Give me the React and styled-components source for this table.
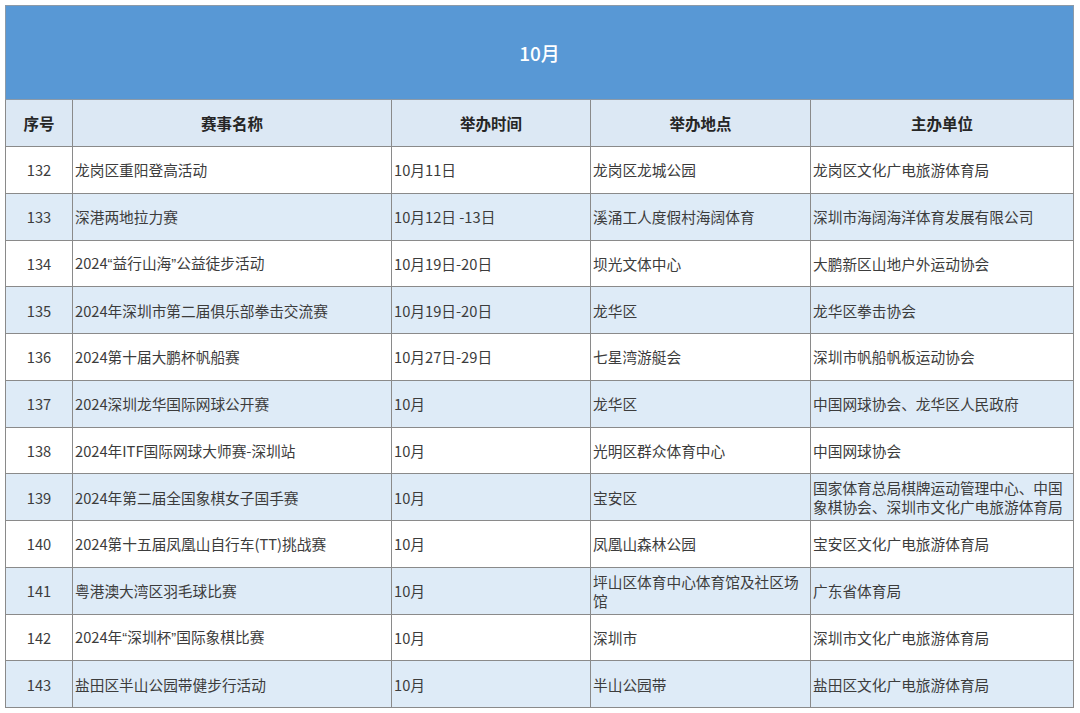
import styled, { createGlobalStyle } from "styled-components";

const GlobalStyle = createGlobalStyle`
  html, body {
    margin: 0;
    padding: 0;
    background: #ffffff;
  }
  body {
    font-family: "Noto Sans CJK SC", "Noto Sans", sans-serif;
  }
`;

const Page = styled.div`
  padding: 5px 7px 6px 5px;
`;

const Table = styled.table`
  width: 1068px;
  border-collapse: collapse;
  table-layout: fixed;
  color: #3c3c3c;
  font-size: 14.7px;
`;

const TitleCell = styled.th`
  height: 93px;
  padding: 0;
  background: #5898d5;
  border: 1px solid #8c9aa8;
  color: #ffffff;
  font-size: 19px;
  font-weight: 500;
  text-align: center;
  vertical-align: middle;
`;

const HeadCell = styled.th`
  height: 46px;
  padding: 0;
  background: #dce8f4;
  border: 1px solid #8a8a8a;
  color: #262626;
  font-size: 15.5px;
  font-weight: 700;
  text-align: center;
  vertical-align: middle;
`;

const Row = styled.tr`
  height: 46.75px;
  background: ${({ $alt }) => ($alt ? "#deebf7" : "#ffffff")};
`;

const Cell = styled.td`
  padding: 0 2px;
  border: 1px solid #8a8a8a;
  vertical-align: middle;
  line-height: 19px;
  text-align: ${({ $center }) => ($center ? "center" : "left")};
  word-break: break-all;
`;

// curly quotes in the source are half width, not the CJK full-width glyph
const Quote = styled.span`
  font-family: "Liberation Sans", sans-serif;
`;

const withQuotes = (text) =>
  text.split(/([“”])/).map((part, i) =>
    part === "“" || part === "”" ? <Quote key={i}>{part}</Quote> : part
  );

const columns = [
  { label: "序号", width: 67 },
  { label: "赛事名称", width: 319 },
  { label: "举办时间", width: 199 },
  { label: "举办地点", width: 220 },
  { label: "主办单位", width: 263 },
];

const events = [
  ["132", "龙岗区重阳登高活动", "10月11日", "龙岗区龙城公园", "龙岗区文化广电旅游体育局"],
  ["133", "深港两地拉力赛", "10月12日 -13日", "溪涌工人度假村海阔体育", "深圳市海阔海洋体育发展有限公司"],
  ["134", "2024“益行山海”公益徒步活动", "10月19日-20日", "坝光文体中心", "大鹏新区山地户外运动协会"],
  ["135", "2024年深圳市第二届俱乐部拳击交流赛", "10月19日-20日", "龙华区", "龙华区拳击协会"],
  ["136", "2024第十届大鹏杯帆船赛", "10月27日-29日", "七星湾游艇会", "深圳市帆船帆板运动协会"],
  ["137", "2024深圳龙华国际网球公开赛", "10月", "龙华区", "中国网球协会、龙华区人民政府"],
  ["138", "2024年ITF国际网球大师赛-深圳站", "10月", "光明区群众体育中心", "中国网球协会"],
  ["139", "2024年第二届全国象棋女子国手赛", "10月", "宝安区", "国家体育总局棋牌运动管理中心、中国象棋协会、深圳市文化广电旅游体育局"],
  ["140", "2024第十五届凤凰山自行车(TT)挑战赛", "10月", "凤凰山森林公园", "宝安区文化广电旅游体育局"],
  ["141", "粤港澳大湾区羽毛球比赛", "10月", "坪山区体育中心体育馆及社区场馆", "广东省体育局"],
  ["142", "2024年“深圳杯”国际象棋比赛", "10月", "深圳市", "深圳市文化广电旅游体育局"],
  ["143", "盐田区半山公园带健步行活动", "10月", "半山公园带", "盐田区文化广电旅游体育局"],
];

export default function App() {
  return (
    <Page>
      <GlobalStyle />
      <Table>
        <colgroup>
          {columns.map((c) => (
            <col key={c.label} style={{ width: c.width }} />
          ))}
        </colgroup>
        <thead>
          <tr>
            <TitleCell colSpan={5}>10月</TitleCell>
          </tr>
          <tr>
            {columns.map((c) => (
              <HeadCell key={c.label}>{c.label}</HeadCell>
            ))}
          </tr>
        </thead>
        <tbody>
          {events.map(([no, name, time, place, org], i) => (
            <Row key={no} $alt={i % 2 === 1}>
              <Cell $center>{no}</Cell>
              <Cell>{withQuotes(name)}</Cell>
              <Cell>{time}</Cell>
              <Cell>{place}</Cell>
              <Cell>{org}</Cell>
            </Row>
          ))}
        </tbody>
      </Table>
    </Page>
  );
}
